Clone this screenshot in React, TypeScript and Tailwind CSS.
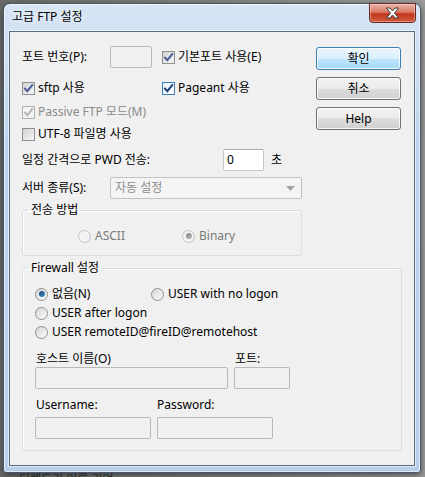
import React from 'react';

const FONT = "font-['Noto_Sans','Noto_Sans_CJK_KR',sans-serif]";

type BoxState = 'normal' | 'focus' | 'disabled';

const CheckBox: React.FC<{ checked?: boolean; state?: BoxState }> = ({ checked, state = 'normal' }) => {
  const box =
    state === 'focus'
      ? 'border-[#3c7fb1] bg-gradient-to-br from-[#e8f3fc] to-[#ffffff]'
      : state === 'disabled'
      ? 'border-[#b1b1b1] bg-[#f4f4f4]'
      : 'border-[#8e8f8f] bg-gradient-to-br from-[#d3d3d3] to-[#f6f6f6]';
  const tick = state === 'disabled' ? '#b4b4b4' : state === 'focus' ? '#1c3f7a' : '#4b5c99';
  return (
    <span className={`w-[13px] h-[13px] shrink-0 border ${box} flex items-center justify-center`}>
      {checked && (
        <svg width="11" height="11" viewBox="0 0 11 11">
          <path d="M2 5.6 L4.3 8.2 L9.2 2.2" fill="none" stroke={tick} strokeWidth="2" strokeLinecap="square" />
        </svg>
      )}
    </span>
  );
};

const Check: React.FC<{ label: string; checked?: boolean; state?: BoxState; className?: string }> = ({
  label,
  checked,
  state,
  className = '',
}) => (
  <div className={`flex items-center gap-[3px] ${className}`}>
    <CheckBox checked={checked} state={state} />
    <span className={state === 'disabled' ? 'text-[#8a8a8a]' : 'text-black'}>{label}</span>
  </div>
);

const Radio: React.FC<{ label: string; checked?: boolean; disabled?: boolean; className?: string }> = ({
  label,
  checked,
  disabled,
  className = '',
}) => (
  <div className={`flex items-center gap-[4px] h-[16px] ${className}`}>
    <span
      className={`w-[13px] h-[13px] shrink-0 rounded-full border flex items-center justify-center ${
        disabled ? 'border-[#c2c2c2] bg-[#f2f2f2]' : 'border-[#8e8f8f] bg-gradient-to-br from-[#d6d6d6] to-[#fbfbfb]'
      }`}
    >
      {checked && (
        <span
          className={`w-[6px] h-[6px] rounded-full ${
            disabled
              ? 'bg-gradient-to-br from-[#7c7c7c] to-[#c2c2c2]'
              : 'bg-gradient-to-br from-[#0f3f6c] to-[#4f9ad6]'
          }`}
        />
      )}
    </span>
    <span className={disabled ? 'text-[#7a7a7a]' : 'text-black'}>{label}</span>
  </div>
);

const Field: React.FC<{ w: string; disabled?: boolean; value?: string; className?: string }> = ({
  w,
  disabled,
  value,
  className = '',
}) => (
  <div
    className={`${w} h-[22px] shrink-0 rounded-[2px] border flex items-center px-[3px] ${
      disabled ? 'border-[#b9b9b9] bg-[#f0f0f0]' : 'border-[#c4c8cf] border-t-[#abadb3] bg-white'
    } ${className}`}
  >
    {value}
  </div>
);

const Button: React.FC<{ label: string; primary?: boolean }> = ({ label, primary }) => (
  <div
    className={`w-[85px] h-[23px] rounded-[3px] border flex items-center justify-center shadow-[inset_0_0_0_1px_rgba(255,255,255,0.8)] ${
      primary
        ? 'border-[#3c7fb1] bg-[linear-gradient(#eaf6fd_0%,#d9f0fc_50%,#bee6fd_50%,#a7d9f5_100%)]'
        : 'border-[#707070] bg-[linear-gradient(#f2f2f2_0%,#ebebeb_50%,#dddddd_50%,#cfcfcf_100%)]'
    }`}
  >
    {label}
  </div>
);

export default function App() {
  return (
    <div className={`w-[425px] h-[477px] overflow-hidden bg-[linear-gradient(90deg,#6b6b6b,#9a9a9a)] pl-[3px] pt-[3px] text-[12px] leading-[16px] ${FONT}`}>
      <div className="w-[418px] h-[470px] rounded-t-[7px] rounded-b-[3px] border border-[#48576a] bg-[linear-gradient(#d7e5f4,#bcd3ec_30%,#b6cfea)] shadow-[inset_0_0_0_1px_rgba(255,255,255,0.6),0_2px_6px_rgba(0,0,0,0.5)] flex flex-col px-[5px] pb-[6px]">
        {/* title bar */}
        <div className="h-[27px] flex items-start justify-between">
          <span className="pt-[5px] pl-[3px] text-black [text-shadow:0_0_6px_#ffffff]">고급 FTP 설정</span>
          <div className="w-[47px] h-[20px] mt-[-1px] mr-[-1px] rounded-b-[4px] border border-[#6a2a22] bg-[linear-gradient(#eab3a7_0%,#d97b66_45%,#c2371c_55%,#d05a3c_100%)] shadow-[inset_0_0_0_1px_rgba(255,255,255,0.35)] flex items-center justify-center">
            <svg width="15" height="12" viewBox="0 0 15 12">
              <polygon
                points="1.5,1 5,1 7.5,4 10,1 13.5,1 9.5,6 13.5,11 10,11 7.5,8 5,11 1.5,11 5.5,6"
                fill="#ffffff"
                stroke="#3b3b3b"
                strokeWidth="1"
                strokeLinejoin="round"
              />
            </svg>
          </div>
        </div>

        {/* client area */}
        <div className="w-[406px] h-[435px] border border-[#5d6d80] bg-[#f0f0f0] shadow-[0_0_0_1px_rgba(255,255,255,0.55)] pl-[12px] pt-[14px]">
          <div className="flex">
            <div className="w-[280px] flex flex-col">
              <div className="h-[22px] flex items-center">
                <span className="w-[88px]">포트 번호(P):</span>
                <Field w="w-[42px]" disabled />
                <Check label="기본포트 사용(E)" checked className="ml-[10px]" />
              </div>
              <div className="h-[20px] mt-[10px] flex items-center">
                <Check label="sftp 사용" checked className="w-[140px]" />
                <Check label="Pageant 사용" checked state="focus" />
              </div>
              <div className="h-[20px] mt-[4px] flex items-center">
                <Check label="Passive FTP 모드(M)" checked state="disabled" />
              </div>
              <div className="h-[20px] mt-[2px] flex items-center">
                <Check label="UTF-8 파일명 사용" />
              </div>
              <div className="h-[22px] mt-[5px] flex items-center">
                <span className="w-[201px]">일정 간격으로 PWD 전송:</span>
                <Field w="w-[41px]" value="0" />
                <span className="ml-[7px]">초</span>
              </div>
              <div className="h-[22px] mt-[6px] flex items-center">
                <span className="w-[88px]">서버 종류(S):</span>
                <div className="w-[192px] h-[22px] rounded-[2px] border border-[#c3c3c3] bg-[#f4f4f4] flex items-center justify-between pl-[4px] pr-[6px] text-[#8c8c8c]">
                  <span>자동 설정</span>
                  <svg width="9" height="5" viewBox="0 0 9 5">
                    <polygon points="0,0 9,0 4.5,5" fill="#a5a5a5" />
                  </svg>
                </div>
              </div>

              <fieldset className="mt-[3px] w-[280px] h-[54px] rounded-[3px] border border-[#d5dfe5] shadow-[inset_1px_1px_0_#ffffff]">
                <legend className="ml-[5px] px-[3px] leading-[16px]">전송 방법</legend>
                <div className="flex mt-[10px] pl-[55px]">
                  <Radio label="ASCII" disabled className="w-[104px]" />
                  <Radio label="Binary" checked disabled />
                </div>
              </fieldset>
            </div>

            <div className="ml-[14px] mt-[1px] flex flex-col gap-[7px]">
              <Button label="확인" primary />
              <Button label="취소" />
              <Button label="Help" />
            </div>
          </div>

          <fieldset className="mt-[4px] w-[380px] h-[191px] rounded-[3px] border border-[#d5dfe5] shadow-[inset_1px_1px_0_#ffffff] pl-[12px]">
            <legend className="ml-[-7px] px-[3px] leading-[16px]">Firewall 설정</legend>
            <div className="flex mt-[10px]">
              <Radio label="없음(N)" checked className="w-[116px]" />
              <Radio label="USER with no logon" />
            </div>
            <Radio label="USER after logon" className="mt-[3px]" />
            <Radio label="USER remoteID@fireID@remotehost" className="mt-[3px]" />

            <div className="flex mt-[11px]">
              <span className="w-[199px] pl-[1px]">호스트 이름(O)</span>
              <span className="pl-[1px]">포트:</span>
            </div>
            <div className="flex gap-[6px]">
              <Field w="w-[193px]" disabled />
              <Field w="w-[56px]" disabled />
            </div>
            <div className="flex mt-[8px]">
              <span className="w-[122px] pl-[1px]">Username:</span>
              <span>Password:</span>
            </div>
            <div className="flex gap-[6px] mt-[4px]">
              <Field w="w-[116px]" disabled />
              <Field w="w-[116px]" disabled />
            </div>
          </fieldset>
        </div>
      </div>
      <div className="pl-[16px] mt-[-1px] text-[#222]">디렉토리 이름 기억</div>
    </div>
  );
}
